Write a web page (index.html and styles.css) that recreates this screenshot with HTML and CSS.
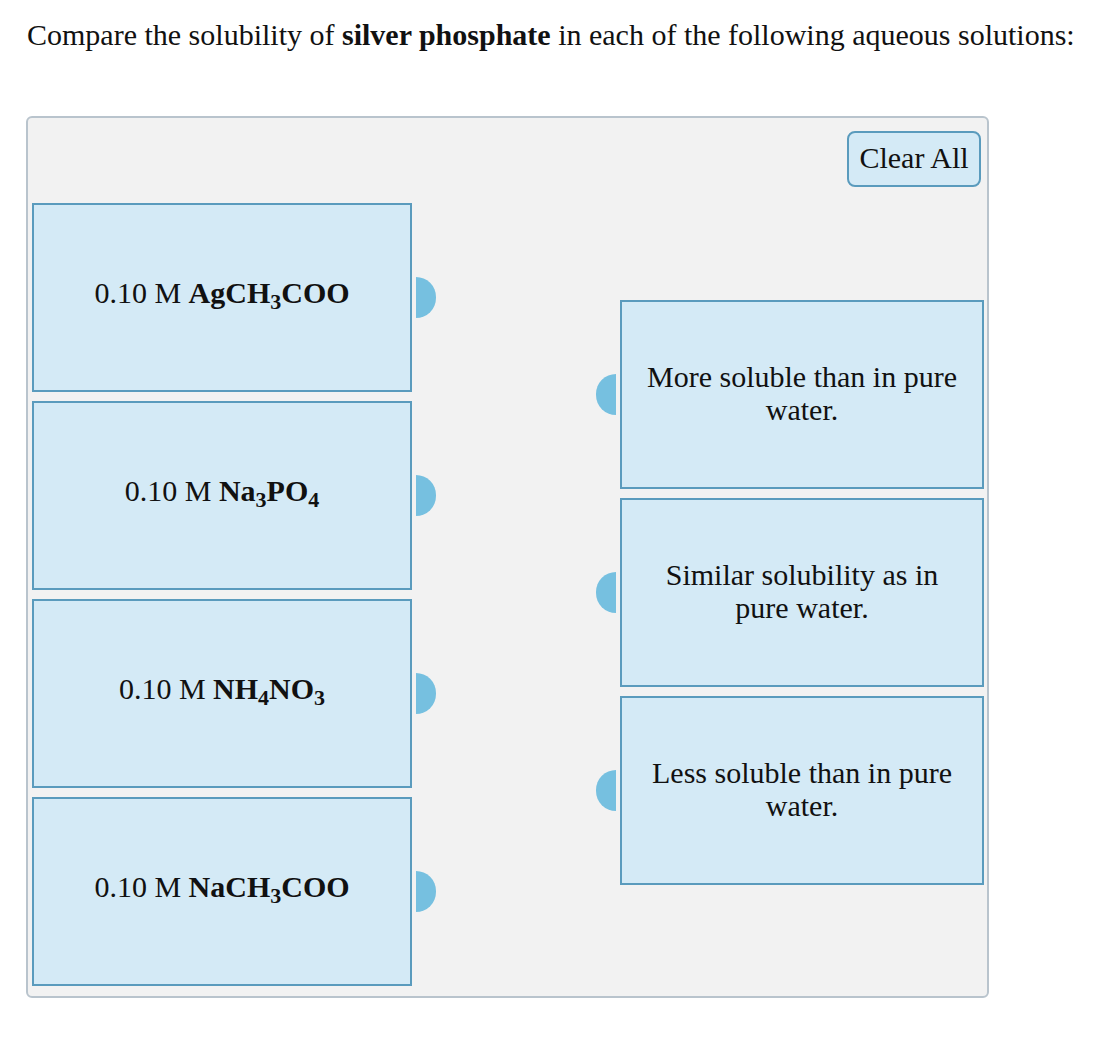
FILE: index.html
```html
<!DOCTYPE html>
<html lang="en">

<head>
    <meta charset="UTF-8">
    <meta name="viewport" content="width=device-width, initial-scale=1.0">
    <title>Solubility</title>
    <link rel="stylesheet" href="styles.css">
</head>

<body>
    <p class="question">Compare the solubility of <b>silver phosphate</b> in each of the following aqueous solutions:</p>

    <div class="board">
        <div class="toolbar">
            <button class="clear-btn">Clear All</button>
        </div>
        <div class="columns">
            <div class="col-left">
                <div class="item">
                    <div class="card">0.10 M&nbsp;<b>AgCH<sub>3</sub>COO</b></div>
                    <span class="tab tab-right"></span>
                </div>
                <div class="item">
                    <div class="card">0.10 M&nbsp;<b>Na<sub>3</sub>PO<sub>4</sub></b></div>
                    <span class="tab tab-right"></span>
                </div>
                <div class="item">
                    <div class="card">0.10 M&nbsp;<b>NH<sub>4</sub>NO<sub>3</sub></b></div>
                    <span class="tab tab-right"></span>
                </div>
                <div class="item">
                    <div class="card">0.10 M&nbsp;<b>NaCH<sub>3</sub>COO</b></div>
                    <span class="tab tab-right"></span>
                </div>
            </div>
            <div class="col-right">
                <div class="item">
                    <span class="tab tab-left"></span>
                    <div class="card card-wide">More soluble than in pure water.</div>
                </div>
                <div class="item">
                    <span class="tab tab-left"></span>
                    <div class="card card-wide">Similar solubility as in pure water.</div>
                </div>
                <div class="item">
                    <span class="tab tab-left"></span>
                    <div class="card card-wide">Less soluble than in pure water.</div>
                </div>
            </div>
        </div>
    </div>
</body>

</html>
```

FILE: styles.css
```css
body {
    margin: 0;
    padding: 0 26px;
    font-family: "Liberation Serif", "Times New Roman", serif;
    font-size: 30px;
    color: #111;
    background-color: white;
}

.question {
    margin: 18px 0 65px 1px;
    line-height: 33px;
}

.board {
    width: 963px;
    height: 882px;
    box-sizing: border-box;
    background-color: #f2f2f2;
    border: 2px solid #b9c4cd;
    border-radius: 6px;
    padding: 13px 3px 0 4px;
}

.toolbar {
    display: flex;
    justify-content: flex-end;
    padding-right: 3px;
}

.clear-btn {
    width: 134px;
    height: 56px;
    background-color: #d4eaf6;
    border: 2px solid #5a9bbd;
    border-radius: 8px;
    font-family: inherit;
    font-size: 30px;
    color: #111;
    padding: 0 0 2px;
    cursor: pointer;
}

.columns {
    display: flex;
    justify-content: space-between;
    margin-top: 16px;
}

.col-left,
.col-right {
    display: flex;
    flex-direction: column;
    gap: 9px;
}

.col-right {
    padding-top: 97px;
}

.item {
    display: flex;
    align-items: center;
}

.card {
    width: 380px;
    height: 189px;
    box-sizing: border-box;
    background-color: #d4eaf6;
    border: 2px solid #5a9bbd;
    display: flex;
    align-items: center;
    justify-content: center;
    text-align: center;
    line-height: 33px;
    padding: 0 20px 10px;
}

.card-wide {
    width: 364px;
    padding: 0 20px 4px;
}

.card sub {
    font-size: 22px;
    vertical-align: -6px;
    line-height: 0;
}

.tab {
    width: 20px;
    height: 41px;
    background-color: #76c0e0;
}

.tab-right {
    margin-left: 4px;
    border-radius: 0 21px 21px 0;
}

.tab-left {
    margin-right: 4px;
    border-radius: 21px 0 0 21px;
}
```
